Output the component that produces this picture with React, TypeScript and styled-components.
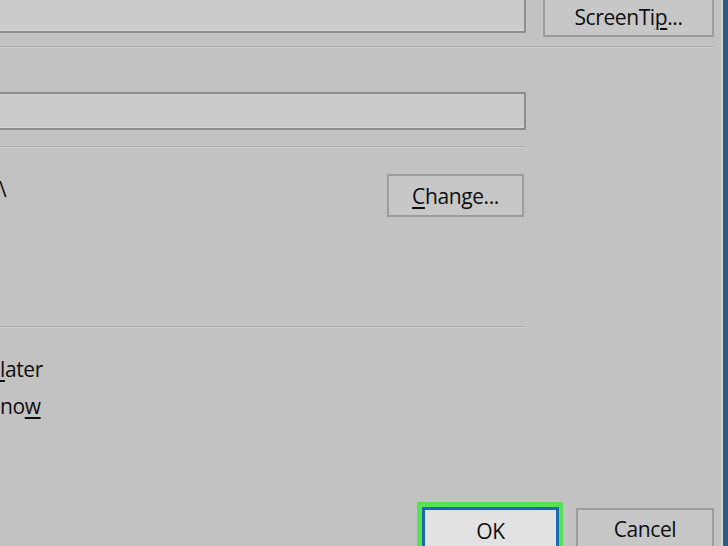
import React from "react";
import styled, { createGlobalStyle } from "styled-components";

const Global = createGlobalStyle`
  html, body { margin: 0; padding: 0; background: #c2c2c2; }
  body { overflow: hidden; }
  #root { width: 728px; height: 546px; }
`;

const Window = styled.div`
  width: 728px;
  height: 546px;
  box-sizing: border-box;
  overflow: hidden;
  background: #c2c2c2;
  border-right: 5px solid #2f5b84;
  font-family: "Open Sans", "Noto Sans", sans-serif;
  font-size: 21px;
  letter-spacing: -0.4px;
  color: #0e0e0e;
`;

const Dialog = styled.div`
  height: 100%;
  box-sizing: border-box;
  border-right: 2px solid #d3d3d3;
  padding-right: 7px;
  display: flex;
  flex-direction: column;
`;

const TopRow = styled.div`
  display: grid;
  grid-template-columns: 526px 1fr;
  column-gap: 17px;
  align-items: start;
  margin-top: -10px;
`;

const TextBox = styled.div<{ $h: number }>`
  height: ${(p) => p.$h}px;
  box-sizing: border-box;
  margin-left: -4px;
  background: #cbcbcb;
  border: 2px solid #8d8d8d;
  box-shadow: inset 0 -1px 0 #d6d6d6;
`;

const Button = styled.div<{ $h: number; $pt?: number }>`
  height: ${(p) => p.$h}px;
  box-sizing: border-box;
  background: #c7c7c7;
  border: 2px solid #9c9c9c;
  display: flex;
  align-items: center;
  justify-content: center;
  padding-top: ${(p) => p.$pt ?? 0}px;
  white-space: nowrap;
`;

const Separator = styled.div<{ $mt: number; $w?: number }>`
  margin-top: ${(p) => p.$mt}px;
  width: ${(p) => (p.$w ? `${p.$w}px` : "auto")};
  height: 0;
  border-top: 1px solid #acacac;
  border-bottom: 1px solid #cfcfcf;
`;

const FieldRow = styled.div<{ $mt: number }>`
  margin-top: ${(p) => p.$mt}px;
  width: 526px;
`;

const PathRow = styled.div`
  margin-top: 26px;
  width: 524px;
  display: flex;
  justify-content: space-between;
  align-items: flex-start;
`;

const Label = styled.div<{ $pt?: number; $ml?: number }>`
  white-space: nowrap;
  padding-top: ${(p) => p.$pt ?? 0}px;
  margin-left: ${(p) => p.$ml ?? 0}px;
`;

const ChangeButton = styled(Button)`
  width: 137px;
`;

const Options = styled.div`
  margin-top: 23px;
  display: flex;
  flex-direction: column;
`;

const Option = styled.div`
  height: 37px;
  line-height: 37px;
  white-space: nowrap;
`;

const Bottom = styled.div`
  margin-top: 77px;
  display: flex;
  justify-content: flex-end;
  align-items: flex-start;
  gap: 13px;
`;

const OkFocus = styled.div`
  width: 146px;
  height: 60px;
  box-sizing: border-box;
  border: 5px solid #55e255;
  border-right-width: 4px;
`;

const OkButton = styled.div`
  height: 100%;
  box-sizing: border-box;
  border: 3px solid #1c69b0;
  background: #e2e2e2;
  box-shadow: inset 0 0 0 1px #d9e6f2;
  display: flex;
  justify-content: center;
  padding-top: 7px;
`;

const CancelButton = styled.div`
  width: 138px;
  height: 60px;
  margin-top: 6px;
  box-sizing: border-box;
  background: #c7c7c7;
  border: 2px solid #9c9c9c;
  display: flex;
  justify-content: center;
  padding-top: 5px;
`;

const U = styled.span`
  text-decoration: underline;
  text-underline-offset: 3px;
  text-decoration-thickness: 2px;
`;

export default function App() {
  return (
    <>
      <Global />
      <Window>
        <Dialog>
          <TopRow>
            <TextBox $h={43} />
            <Button $h={47} $pt={7}>
              <span>
                ScreenTi<U>p</U>...
              </span>
            </Button>
          </TopRow>
          <Separator $mt={9} />
          <FieldRow $mt={44}>
            <TextBox $h={38} />
          </FieldRow>
          <Separator $mt={16} $w={526} />
          <PathRow>
            <Label $pt={1} $ml={-1}>\</Label>
            <ChangeButton $h={43}>
              <span>
                <U>C</U>hange...
              </span>
            </ChangeButton>
          </PathRow>
          <Separator $mt={109} $w={526} />
          <Options>
            <Option>
              <U>l</U>ater
            </Option>
            <Option>
              no<U>w</U>
            </Option>
          </Options>
          <Bottom>
            <OkFocus>
              <OkButton>OK</OkButton>
            </OkFocus>
            <CancelButton>Cancel</CancelButton>
          </Bottom>
        </Dialog>
      </Window>
    </>
  );
}
